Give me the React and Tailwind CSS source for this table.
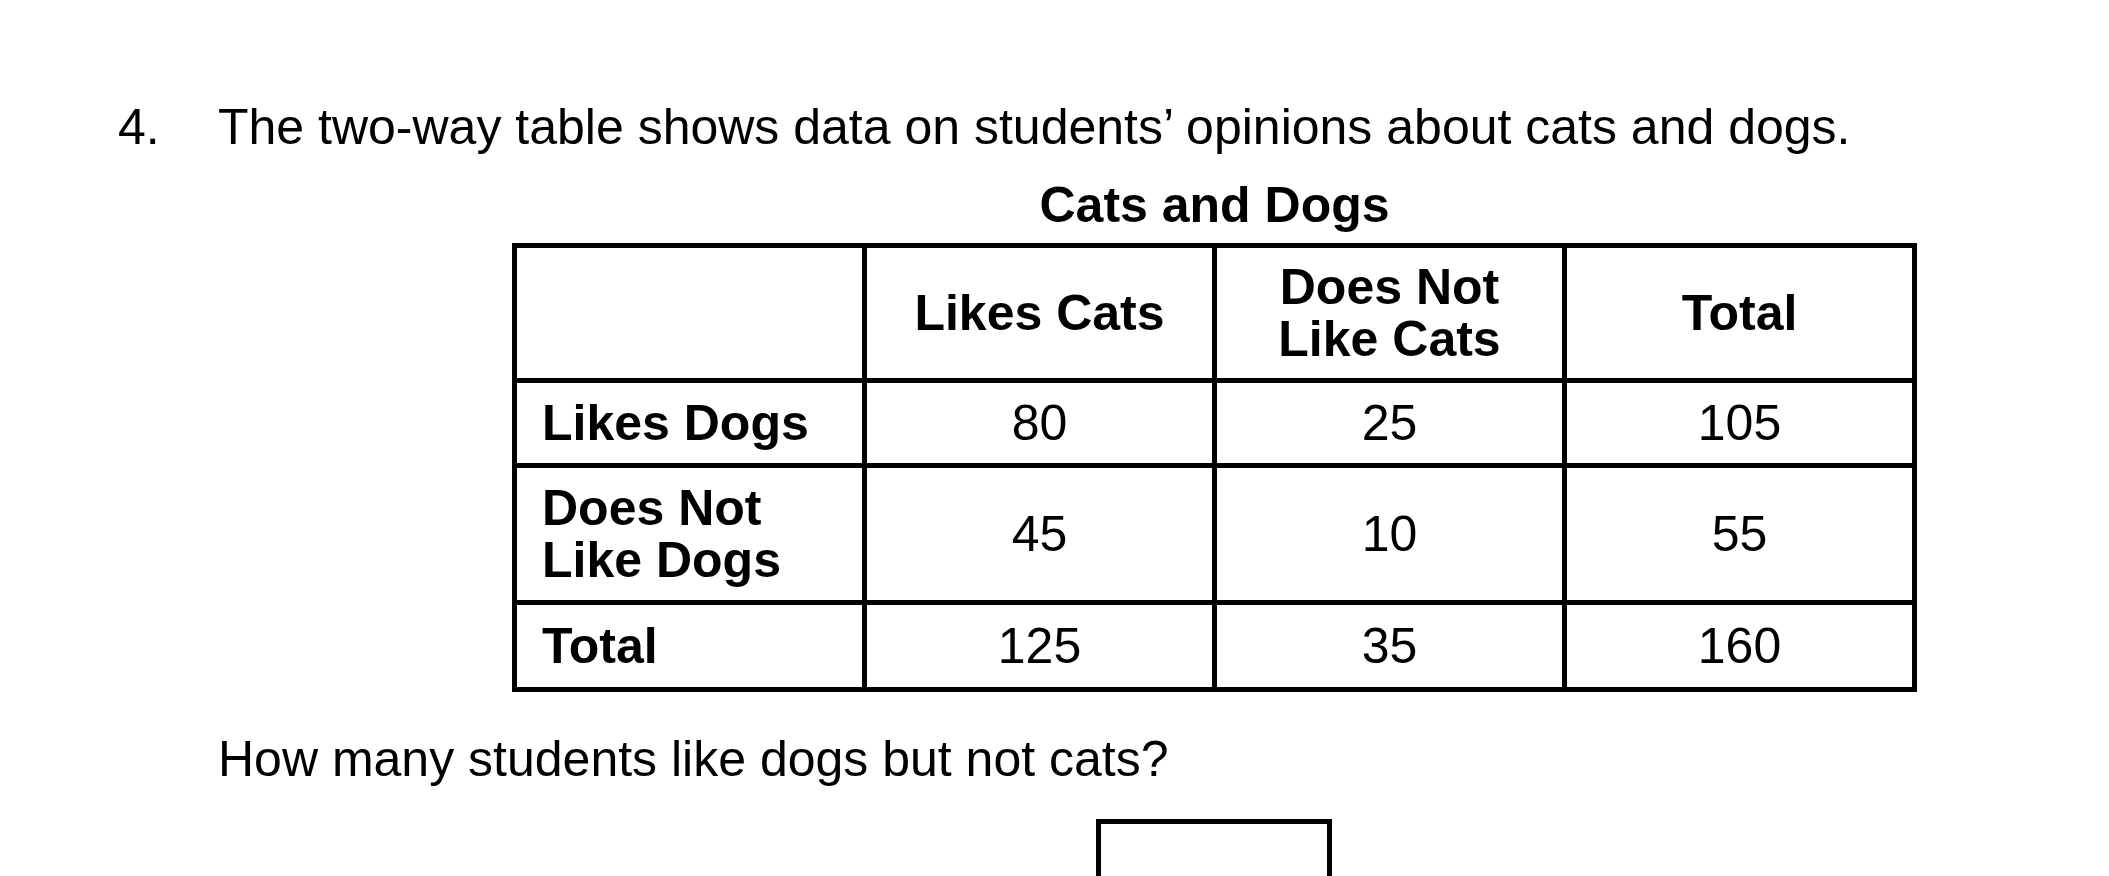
const rows = [
  { label: ['Likes Dogs'], cells: ['80', '25', '105'], h: 'h-[80px]' },
  { label: ['Does Not', 'Like Dogs'], cells: ['45', '10', '55'], h: 'h-[132px]' },
  { label: ['Total'], cells: ['125', '35', '160'], h: 'h-[82px]' },
]

const headers = [['Likes Cats'], ['Does Not', 'Like Cats'], ['Total']]

const Lines = ({ lines }) => (
  <div className="flex flex-col">
    {lines.map((line, i) => (
      <span key={i} className={lines.length > 1 ? 'leading-[52px]' : 'leading-[50px]'}>{line}</span>
    ))}
  </div>
)

const App = () => {
  return (
    <div className="w-full h-[876px] overflow-hidden bg-white text-black font-['Liberation_Sans',Arial,sans-serif] text-[50px] leading-[50px] pl-[118px] pt-[102px]">
      <div className="flex">
        <span className="w-[100px] shrink-0">4.</span>
        <span className="whitespace-nowrap">The two-way table shows data on students’ opinions about cats and dogs.</span>
      </div>

      <div className="ml-[394px] w-[1405px]">
        <div className="mt-[28px] text-center font-bold">Cats and Dogs</div>
        <div className="mt-[13px] grid grid-cols-[345px_345px_345px_345px] gap-[5px] bg-black p-[5px]">
          <div className="bg-white h-[130px]"></div>
          {headers.map((lines, i) => (
            <div key={i} className="bg-white h-[130px] flex items-center justify-center text-center font-bold">
              <Lines lines={lines} />
            </div>
          ))}
          {rows.map((row, r) => (
            <div key={r} className="contents">
              <div className={`bg-white ${row.h} flex items-center pl-[25px] font-bold`}>
                <Lines lines={row.label} />
              </div>
              {row.cells.map((value, c) => (
                <div key={c} className={`bg-white ${row.h} flex items-center justify-center`}>
                  {value}
                </div>
              ))}
            </div>
          ))}
        </div>
      </div>

      <div className="ml-[100px] mt-[42px] whitespace-nowrap">How many students like dogs but not cats?</div>

      <div className="ml-[978px] mt-[35px] w-[236px] h-[120px] border-[5px] border-black"></div>
    </div>
  )
}

export default App
